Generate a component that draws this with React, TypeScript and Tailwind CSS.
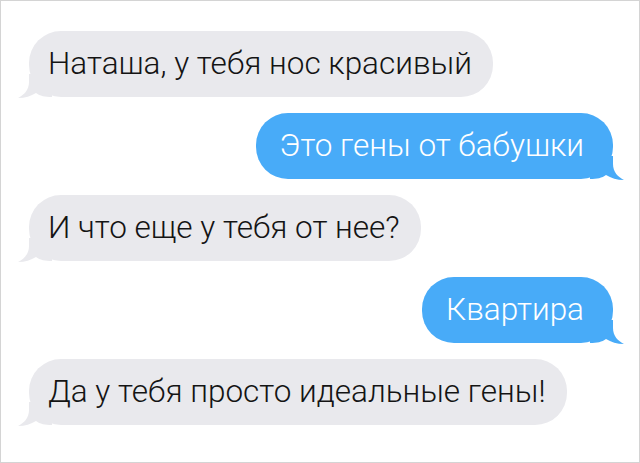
const messages = [
  { text: "Наташа, у тебя нос красивый", mine: false },
  { text: "Это гены от бабушки", mine: true },
  { text: "И что еще у тебя от нее?", mine: false },
  { text: "Квартира", mine: true },
  { text: "Да у тебя просто идеальные гены!", mine: false },
];

function Tail({ mine }: { mine: boolean }) {
  return (
    <svg
      width="34"
      height="24"
      viewBox="0 0 34 24"
      className={
        mine
          ? "absolute right-[-11px] bottom-[-1px] -scale-x-100"
          : "absolute left-[-11px] bottom-[-1px]"
      }
    >
      <path
        d="M11 0 L11 8 C11 16 6 21 0 24 C7 24 13 22 18 19 C22 22 27 23 34 23 L34 0 Z"
        fill={mine ? "#48abf8" : "#e9e9ed"}
      />
    </svg>
  );
}

export default function App() {
  return (
    <div className="w-[640px] h-[463px] bg-white border border-[#d4d4d4] font-['Roboto',sans-serif]">
      <div className="flex flex-col gap-[16px] pt-[30px] pl-[28px] pr-[26px]">
        {messages.map((m) => (
          <div
            key={m.text}
            className={`relative h-[66px] flex items-center rounded-[32px] text-[31.5px] font-light leading-none ${
              m.mine
                ? "self-end pl-[24px] pr-[29px] bg-[#48abf8] text-white"
                : "self-start pl-[19px] pr-[21px] bg-[#e9e9ed] text-[#141414]"
            }`}
          >
            <Tail mine={m.mine} />
            <span className="relative">{m.text}</span>
          </div>
        ))}
      </div>
    </div>
  );
}
